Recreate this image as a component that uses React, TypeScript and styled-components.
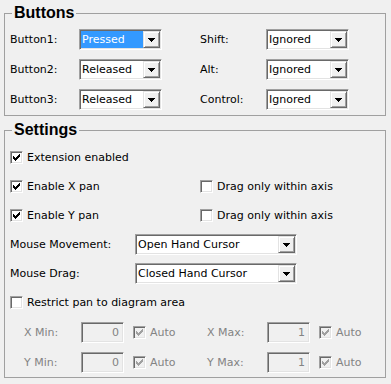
import React from "react";
import styled, { createGlobalStyle, css } from "styled-components";

const GlobalStyle = createGlobalStyle`
  html, body { margin: 0; padding: 0; background: #f0f0f0; }
  body {
    font-family: "DejaVu Sans", Tahoma, sans-serif;
    font-size: 11px;
    color: #000;
  }
  *, *::before, *::after { box-sizing: border-box; }
`;

const sunken = css`
  border: 1px solid;
  border-color: #a0a0a0 #ffffff #ffffff #a0a0a0;
  box-shadow: inset 1px 1px 0 #696969, inset -1px -1px 0 #e3e3e3;
`;

const raised = css`
  border: 1px solid;
  border-color: #e3e3e3 #696969 #696969 #e3e3e3;
  box-shadow: inset 1px 1px 0 #ffffff, inset -1px -1px 0 #a0a0a0;
`;

const Window = styled.div`
  width: 391px;
  height: 384px;
  padding: 4px 5px 0 4px;
  display: flex;
  flex-direction: column;
  gap: 5px;
  background: #f0f0f0;
`;

const Group = styled.fieldset<{ $padTop: number; $padBottom: number }>`
  margin: 0;
  min-width: 0;
  border: 1px solid #a0a0a0;
  padding: ${(p) => p.$padTop}px 0 ${(p) => p.$padBottom}px 5px;
`;

const Legend = styled.legend`
  font-family: "Liberation Sans", Arial, sans-serif;
  font-weight: bold;
  font-size: 16px;
  line-height: 18px;
  padding: 0 2px;
  margin-left: 2px;
  color: #000;
`;

const ButtonsGrid = styled.div`
  display: grid;
  grid-template-columns: 69px 121px 66px 83px;
  grid-auto-rows: 21px;
  row-gap: 9px;
  align-items: center;
`;

const Label = styled.span<{ $disabled?: boolean }>`
  white-space: nowrap;
  color: ${(p) => (p.$disabled ? "#838383" : "#000")};
`;

const ComboBox = styled.div<{ $width: number }>`
  ${sunken};
  width: ${(p) => p.$width}px;
  height: 21px;
  padding: 1px;
  display: flex;
  background: #ffffff;
`;

const ComboValue = styled.div<{ $selected?: boolean }>`
  flex: 1;
  min-width: 0;
  padding-left: 1px;
  line-height: 17px;
  white-space: nowrap;
  overflow: hidden;
  background: ${(p) => (p.$selected ? "#3399ff" : "transparent")};
  color: ${(p) => (p.$selected ? "#ffffff" : "#000")};
`;

const ComboButton = styled.div`
  ${raised};
  width: 17px;
  height: 17px;
  flex: none;
  display: flex;
  align-items: center;
  justify-content: center;
  background: #f0f0f0;
`;

const SettingsStack = styled.div`
  display: flex;
  flex-direction: column;
  gap: 8px;
`;

const CheckRow = styled.div`
  display: grid;
  grid-template-columns: 190px auto;
  height: 21px;
  align-items: center;
`;

const FieldRow = styled.div`
  display: grid;
  grid-template-columns: 125px auto;
  height: 21px;
  align-items: center;
`;

const LimitRow = styled.div`
  display: grid;
  grid-template-columns: 57px 43px 83px 60px 43px auto;
  height: 21px;
  align-items: center;
  padding-left: 14px;
  margin-top: 1px;
`;

const CheckLabel = styled.label<{ $disabled?: boolean; $indent?: number }>`
  display: inline-flex;
  align-items: center;
  gap: 4px;
  white-space: nowrap;
  padding-left: ${(p) => p.$indent ?? 0}px;
  color: ${(p) => (p.$disabled ? "#838383" : "#000")};
`;

const CheckBox = styled.span<{ $disabled?: boolean }>`
  ${sunken};
  width: 13px;
  height: 13px;
  flex: none;
  display: inline-flex;
  align-items: center;
  justify-content: center;
  background: ${(p) => (p.$disabled ? "#f0f0f0" : "#ffffff")};
`;

const EditBox = styled.div`
  ${sunken};
  width: 43px;
  height: 21px;
  background: #f0f0f0;
  text-align: right;
  padding: 0 4px;
  line-height: 19px;
  color: #838383;
`;

const Arrow = () => (
  <svg width="7" height="4" viewBox="0 0 7 4" shapeRendering="crispEdges">
    <path d="M0 0H7V1H6V2H5V3H4V4H3V3H2V2H1V1H0Z" fill="#000" />
  </svg>
);

const CheckMark = ({ color }: { color: string }) => (
  <svg width="7" height="7" viewBox="0 0 7 7" shapeRendering="crispEdges">
    <g fill={color}>
      <rect x="6" y="0" width="1" height="1" />
      <rect x="5" y="1" width="2" height="1" />
      <rect x="0" y="2" width="1" height="1" />
      <rect x="4" y="2" width="3" height="1" />
      <rect x="0" y="3" width="2" height="1" />
      <rect x="3" y="3" width="3" height="1" />
      <rect x="0" y="4" width="5" height="1" />
      <rect x="1" y="5" width="3" height="1" />
      <rect x="2" y="6" width="1" height="1" />
    </g>
  </svg>
);

const Combo = ({ value, width, selected }: { value: string; width: number; selected?: boolean }) => (
  <ComboBox $width={width}>
    <ComboValue $selected={selected}>{value}</ComboValue>
    <ComboButton>
      <Arrow />
    </ComboButton>
  </ComboBox>
);

const Check = ({
  label,
  checked,
  disabled,
  indent,
}: {
  label: string;
  checked?: boolean;
  disabled?: boolean;
  indent?: number;
}) => (
  <CheckLabel $disabled={disabled} $indent={indent}>
    <CheckBox $disabled={disabled}>
      {checked && <CheckMark color={disabled ? "#a0a0a0" : "#000"} />}
    </CheckBox>
    {label}
  </CheckLabel>
);

export default function App() {
  return (
    <>
      <GlobalStyle />
      <Window>
        <Group $padTop={7} $padBottom={5}>
          <Legend>Buttons</Legend>
          <ButtonsGrid>
            <Label>Button1:</Label>
            <Combo value="Pressed" width={83} selected />
            <Label>Shift:</Label>
            <Combo value="Ignored" width={83} />
            <Label>Button2:</Label>
            <Combo value="Released" width={83} />
            <Label>Alt:</Label>
            <Combo value="Ignored" width={83} />
            <Label>Button3:</Label>
            <Combo value="Released" width={83} />
            <Label>Control:</Label>
            <Combo value="Ignored" width={83} />
          </ButtonsGrid>
        </Group>
        <Group $padTop={8} $padBottom={4}>
          <Legend>Settings</Legend>
          <SettingsStack>
            <CheckRow>
              <Check label="Extension enabled" checked />
            </CheckRow>
            <CheckRow>
              <Check label="Enable X pan" checked />
              <Check label="Drag only within axis" />
            </CheckRow>
            <CheckRow>
              <Check label="Enable Y pan" checked />
              <Check label="Drag only within axis" />
            </CheckRow>
            <FieldRow>
              <Label>Mouse Movement:</Label>
              <Combo value="Open Hand Cursor" width={162} />
            </FieldRow>
            <FieldRow>
              <Label>Mouse Drag:</Label>
              <Combo value="Closed Hand Cursor" width={162} />
            </FieldRow>
            <CheckRow>
              <Check label="Restrict pan to diagram area" />
            </CheckRow>
            <LimitRow>
              <Label $disabled>X Min:</Label>
              <EditBox>0</EditBox>
              <Check label="Auto" checked disabled indent={9} />
              <Label $disabled>X Max:</Label>
              <EditBox>1</EditBox>
              <Check label="Auto" checked disabled indent={9} />
            </LimitRow>
            <LimitRow>
              <Label $disabled>Y Min:</Label>
              <EditBox>0</EditBox>
              <Check label="Auto" checked disabled indent={9} />
              <Label $disabled>Y Max:</Label>
              <EditBox>1</EditBox>
              <Check label="Auto" checked disabled indent={9} />
            </LimitRow>
          </SettingsStack>
        </Group>
      </Window>
    </>
  );
}
